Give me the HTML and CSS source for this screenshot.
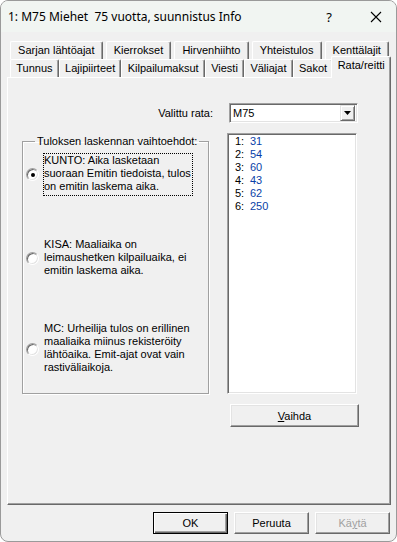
FILE: index.html
```html
<!DOCTYPE html>
<html>
<head>
<meta charset="utf-8">
<link rel="stylesheet" href="styles.css">
</head>
<body>
<div class="window">
  <div class="titlebar">
    <span class="title">1: M75 Miehet&nbsp; 75 vuotta, suunnistus Info</span>
    <span class="help">?</span>
    <span class="close"><svg width="12" height="12" viewBox="0 0 12 12"><path d="M1 1L11 11M11 1L1 11" stroke="#000" stroke-width="1.1" fill="none"/></svg></span>
  </div>
  <div class="body">
    <div class="tabs">
      <div class="tabrow back">
        <div class="tab">Sarjan lähtöajat</div>
        <div class="tab">Kierrokset</div>
        <div class="tab">Hirvenhiihto</div>
        <div class="tab">Yhteistulos</div>
        <div class="tab">Kenttälajit</div>
      </div>
      <div class="tabrow front">
        <div class="tab">Tunnus</div>
        <div class="tab">Lajipiirteet</div>
        <div class="tab">Kilpailumaksut</div>
        <div class="tab">Viesti</div>
        <div class="tab">Väliajat</div>
        <div class="tab">Sakot</div>
        <div class="tab sel">Rata/reitti</div>
      </div>
    </div>
    <div class="panel">
      <div class="grid">
        <div class="rata-label">Valittu rata:</div>
        <div class="combo">
          <span class="combo-text">M75</span>
          <span class="drop"><svg width="7" height="4" viewBox="0 0 7 4"><path d="M0 0H7L3.5 4Z" fill="#000"/></svg></span>
        </div>
        <fieldset class="group">
          <legend>Tuloksen laskennan vaihtoehdot:</legend>
          <div class="option">
            <span class="radio checked"></span>
            <span class="opt-text focus">KUNTO: Aika lasketaan<br>suoraan Emitin tiedoista, tulos<br>on emitin laskema aika.</span>
          </div>
          <div class="option">
            <span class="radio"></span>
            <span class="opt-text">KISA: Maaliaika on<br>leimaushetken kilpailuaika, ei<br>emitin laskema aika.</span>
          </div>
          <div class="option">
            <span class="radio"></span>
            <span class="opt-text">MC: Urheilija tulos on erillinen<br>maaliaika miinus rekisteröity<br>lähtöaika. Emit-ajat ovat vain<br>rastiväliaikoja.</span>
          </div>
        </fieldset>
        <div class="list">
          <div class="item"><span class="num">1:</span><span class="val">31</span></div>
          <div class="item"><span class="num">2:</span><span class="val">54</span></div>
          <div class="item"><span class="num">3:</span><span class="val">60</span></div>
          <div class="item"><span class="num">4:</span><span class="val">43</span></div>
          <div class="item"><span class="num">5:</span><span class="val">62</span></div>
          <div class="item"><span class="num">6:</span><span class="val">250</span></div>
        </div>
        <div></div>
        <button class="btn vaihda"><u>V</u>aihda</button>
      </div>
    </div>
    <div class="footer">
      <button class="btn def">OK</button>
      <button class="btn">Peruuta</button>
      <button class="btn disabled">Kä<u>y</u>tä</button>
    </div>
  </div>
</div>
</body>
</html>
```
FILE: styles.css
```css
* { box-sizing: border-box; }
html, body { margin: 0; padding: 0; background: #fff; }
body { width: 397px; height: 542px; overflow: hidden; font-family: "Liberation Sans", Arial, sans-serif; font-size: 11px; color: #000; }

.window {
  width: 397px; height: 542px;
  border: 1px solid #9a9a9a;
  border-radius: 8px;
  background: #f0f0f0;
  overflow: hidden;
  display: flex; flex-direction: column;
}
.titlebar {
  height: 31px; flex: none;
  background: #f1f5f2;
  display: flex; align-items: center;
  padding-left: 7px;
}
.title { font-family: "Noto Sans", "Open Sans", sans-serif; font-size: 12px; flex: 1; letter-spacing: 0; }
.help { font-family: "Noto Sans", sans-serif; font-size: 13px; width: 12px; margin-right: 35px; text-align: center; }
.close { width: 12px; margin-right: 14px; display: flex; }

.body { flex: 1; display: flex; flex-direction: column; padding: 9px 5px 0 6px; }

.tabs { margin: 0 2px 0 3px; display: flex; flex-direction: column; }
.tabrow { display: flex; height: 18px; }
.tabrow.back .tab { margin-right: 3px; }
.tabrow.back .tab:last-child { margin-right: 0; }
.tab {
  flex: 1 1 auto;
  display: flex; align-items: center; justify-content: center;
  padding: 0 5px 1px;
  border-top: 1px solid #fff; border-left: 1px solid #fff; border-right: 1px solid #696969;
  box-shadow: inset -1px 0 #a0a0a0;
  border-radius: 2px 2px 0 0;
  white-space: nowrap;
  background: #f0f0f0;
}
.tab.sel {
  position: relative; z-index: 2;
  margin: -3px -2px -1px -2px;
  padding-bottom: 5px;
}

.panel {
  height: 428px;
  border-top: 1px solid #fff; border-left: 1px solid #fff;
  border-right: 1px solid #696969; border-bottom: 1px solid #696969;
  box-shadow: inset -1px -1px #a0a0a0;
  padding: 25px 0 0 14px;
}
.grid {
  display: grid;
  grid-template-columns: 191px 132px;
  grid-template-rows: 20px 261px 23px;
  column-gap: 14px; row-gap: 10px;
}
.rata-label { text-align: right; align-self: center; padding-bottom: 1px; }
.combo {
  margin-left: 2px; margin-right: 1px;
  display: flex; align-items: center;
  background: #fff;
  border-top: 1px solid #a0a0a0; border-left: 1px solid #a0a0a0;
  border-right: 1px solid #fff; border-bottom: 1px solid #fff;
  box-shadow: inset 1px 1px #696969, inset -1px -1px #e3e3e3;
  padding: 0 2px 0 3px;
}
.combo-text { flex: 1; }
.drop {
  width: 15px; height: 16px;
  background: #f0f0f0;
  border-top: 1px solid #e3e3e3; border-left: 1px solid #e3e3e3;
  border-right: 1px solid #696969; border-bottom: 1px solid #696969;
  box-shadow: inset 1px 1px #fff, inset -1px -1px #a0a0a0;
  display: flex; align-items: center; justify-content: center;
}

.group {
  margin: 2px 4px 0 0; padding: 0 0 0 3px;
  min-width: 0;
  border: 1px solid #a0a0a0;
  box-shadow: inset 1px 1px #fff, 1px 1px #fff;
  display: flex; flex-direction: column; gap: 41px;
}
.group legend { margin-left: 9px; padding: 0 2px; line-height: 13px; }
.option { display: flex; align-items: center; gap: 4px; }
.option:first-of-type { margin-top: 5px; }
.radio {
  width: 13px; height: 13px; flex: none; border-radius: 50%;
  background: #fff;
  border: 1px solid; border-color: #a0a0a0 #fff #fff #a0a0a0;
  box-shadow: inset 1px 1px #696969, inset -1px -1px #e3e3e3;
  display: flex; align-items: center; justify-content: center;
}
.radio.checked::after { content: ""; width: 4px; height: 4px; border-radius: 50%; background: #000; }
.opt-text { line-height: 13px; border: 1px dotted transparent; padding: 0 1px 2px 0; }
.opt-text.focus { border-color: #000; }

.list {
  background: #fff;
  border-top: 1px solid #a0a0a0; border-left: 1px solid #a0a0a0;
  border-right: 1px solid #fff; border-bottom: 1px solid #fff;
  box-shadow: inset 1px 1px #696969, inset -1px -1px #e3e3e3;
  padding: 1px 0 0 7px;
  margin-right: 2px;
}
.item { line-height: 13px; display: flex; }
.num { color: #000; width: 15px; }
.val { color: #0a3fa8; }

.btn {
  font-family: "Liberation Sans", Arial, sans-serif; font-size: 11px; color: #000;
  background: #f0f0f0;
  border: 1px solid; border-color: #fff #696969 #696969 #fff;
  box-shadow: inset -1px -1px #a0a0a0, inset 1px 1px #e3e3e3;
  padding: 0; margin: 0;
}
.vaihda { margin-left: 3px; height: 23px; }
.btn.def {
  border: 1px solid #000;
  box-shadow: inset 1px 1px #fff, inset -1px -1px #696969, inset -2px -2px #a0a0a0;
}
.btn.disabled { color: #a0a0a0; }

.footer { display: flex; justify-content: flex-end; gap: 6px; padding: 7px 1px 0 0; }
.footer .btn { width: 75px; height: 22px; }
```
